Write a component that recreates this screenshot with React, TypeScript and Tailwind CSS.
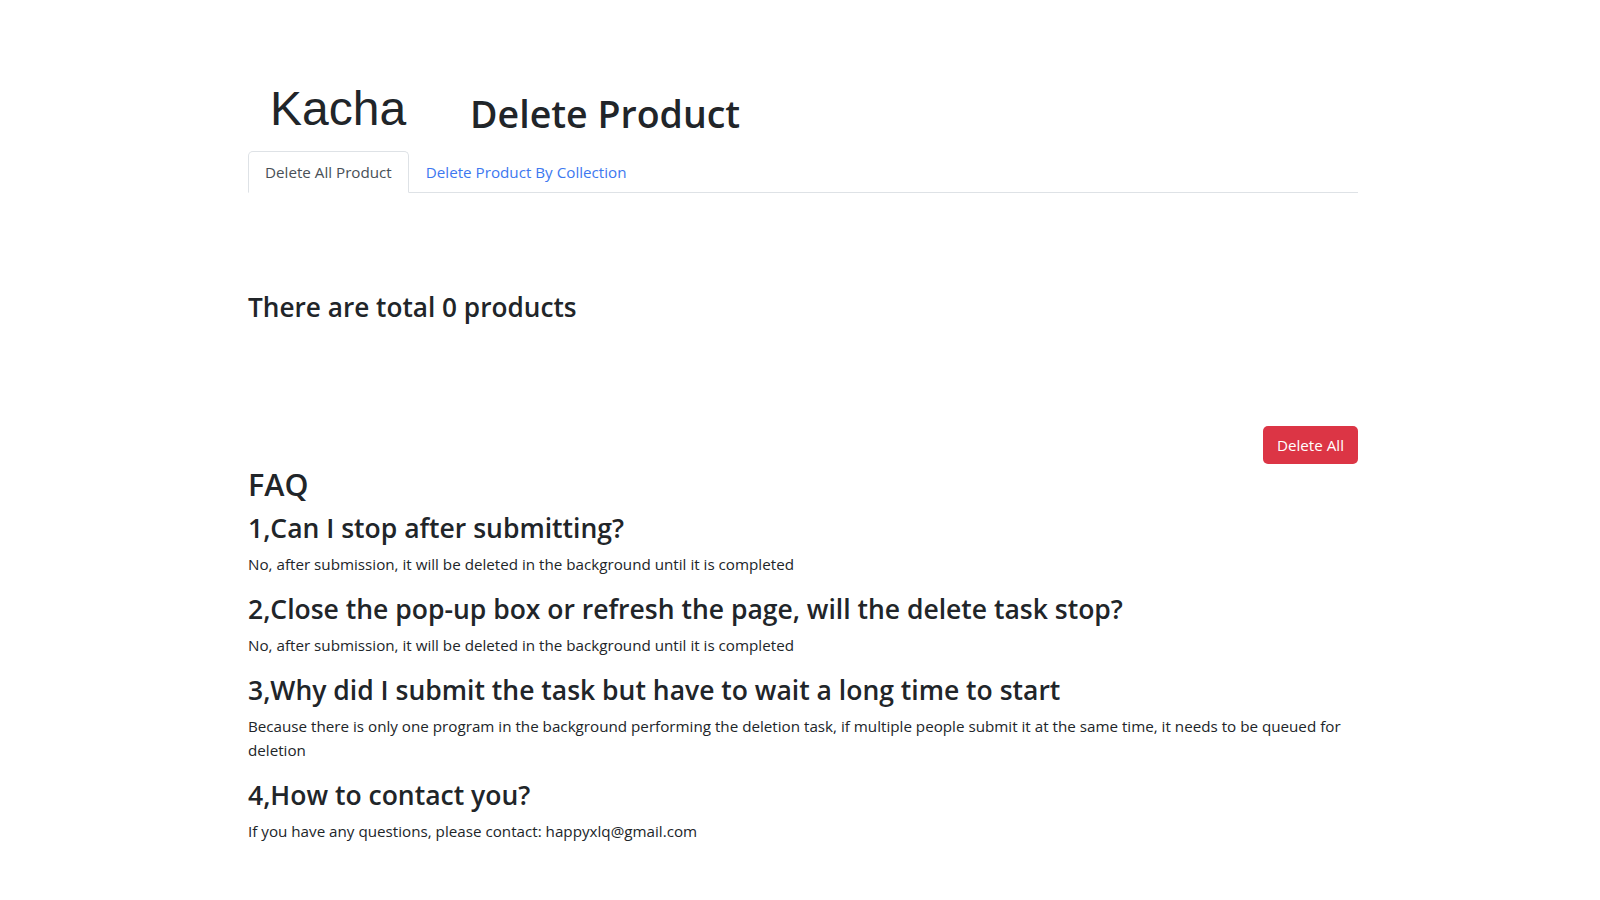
import React from 'react';

const faqs = [
  {
    q: '1,Can I stop after submitting?',
    a: 'No, after submission, it will be deleted in the background until it is completed',
  },
  {
    q: '2,Close the pop-up box or refresh the page, will the delete task stop?',
    a: 'No, after submission, it will be deleted in the background until it is completed',
  },
  {
    q: '3,Why did I submit the task but have to wait a long time to start',
    a: 'Because there is only one program in the background performing the deletion task, if multiple people submit it at the same time, it needs to be queued for deletion',
  },
  {
    q: '4,How to contact you?',
    a: 'If you have any questions, please contact: happyxlq@gmail.com',
  },
];

export default function App() {
  return (
    <div className="min-h-[900px] bg-white text-[#212529] font-['Open_Sans',sans-serif]">
      <div className="ml-[248px] w-[1110px] pt-[78px]">
        {/* Header */}
        <div className="flex items-end h-[60px]">
          <span className="ml-[22px] text-[48px] leading-none font-['Liberation_Sans',Arial,sans-serif] text-[#212529] mb-[5px]">
            Kacha
          </span>
          <h1 className="ml-[64px] text-[37.5px] leading-none font-semibold mb-[6px]">Delete Product</h1>
        </div>

        {/* Tabs */}
        <div className="mt-[13px] flex border-b border-[#dee2e6]">
          <button className="h-[42px] px-4 text-[15.2px] text-[#495057] bg-white border border-[#dee2e6] border-b-white rounded-t-[5px] -mb-px">
            Delete All Product
          </button>
          <button className="h-[42px] px-4 text-[15.2px] text-[#3d78f0] border border-transparent -mb-px">
            Delete Product By Collection
          </button>
        </div>

        {/* Count */}
        <h3 className="mt-[97px] text-[26.2px] leading-[34px] font-semibold">There are total 0 products</h3>

        {/* Delete button */}
        <div className="mt-[102px] flex justify-end">
          <button className="h-[38px] px-[14px] rounded-[5px] bg-[#dc3545] text-white text-[15.2px]">Delete All</button>
        </div>

        {/* FAQ */}
        <h2 className="mt-[1px] mb-[9px] text-[30.5px] leading-[38px] font-semibold">FAQ</h2>
        <div className="flex flex-col">
          {faqs.map((f) => (
            <div key={f.q}>
              <h4 className="mb-[8px] text-[26.5px] leading-[32px] font-semibold">{f.q}</h4>
              <p className="mb-[17px] text-[15.2px] leading-[24px]">{f.a}</p>
            </div>
          ))}
        </div>
      </div>
    </div>
  );
}
